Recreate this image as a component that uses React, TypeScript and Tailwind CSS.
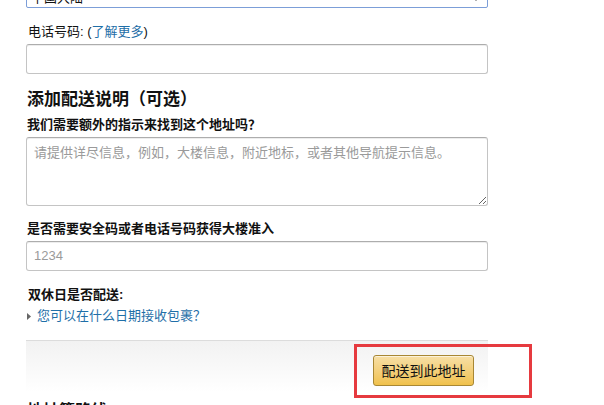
import React from "react";

const font = "font-['Liberation_Sans','Noto_Sans_CJK_SC',sans-serif]";

export default function App() {
  return (
    <div className={`relative w-[604px] h-[405px] overflow-hidden bg-white text-[#111] ${font}`}>
      <div className="flex flex-col ml-[26px] w-[462px]">
        {/* select (cut at top) */}
        <div className="relative mt-[-15px] h-[23px] border border-[#7c9ed8] rounded-[2px] bg-white flex items-end pl-[4px] text-[13px] leading-[18px]">
          中国大陆
          <svg className="absolute right-[8px] top-[11px]" width="6" height="4" viewBox="0 0 6 4">
            <path d="M0 0 L6 0 L3 4 Z" fill="#333" />
          </svg>
        </div>

        <div className="mt-[15px] ml-[2px] text-[13px] leading-[18px]">
          电话号码: (<span className="text-[#1f6fa8]">了解更多</span>)
        </div>
        <div className="mt-[3px] h-[30px] border border-[#c4c4c4] border-t-[#adadad] rounded-[3px] shadow-[inset_0_1px_0_rgba(0,0,0,0.07)]" />

        <div className="mt-[14px] ml-[1px] text-[17px] leading-[24px] font-bold">添加配送说明（可选）</div>
        <div className="mt-[4px] ml-[1px] text-[13px] leading-[18px] font-bold">我们需要额外的指示来找到这个地址吗？</div>
        <textarea
          className="mt-[3px] h-[69px] w-full border border-[#c4c4c4] border-t-[#adadad] rounded-[3px] shadow-[inset_0_1px_0_rgba(0,0,0,0.07)] px-[7px] py-[6px] text-[13px] leading-[18px] placeholder:text-[#9a9a9a] outline-none"
          placeholder="请提供详尽信息，例如，大楼信息，附近地标，或者其他导航提示信息。"
        />

        <div className="mt-[14px] ml-[1px] text-[13px] leading-[18px] font-bold">是否需要安全码或者电话号码获得大楼准入</div>
        <div className="mt-[3px] h-[30px] border border-[#c4c4c4] border-t-[#adadad] rounded-[3px] shadow-[inset_0_1px_0_rgba(0,0,0,0.07)] flex items-center px-[7px] text-[13px] text-[#9a9a9a]">
          1234
        </div>

        <div className="mt-[15px] ml-[2px] text-[13px] leading-[18px] font-bold">双休日是否配送:</div>
        <div className="mt-[3px] ml-[1px] flex items-center gap-[6px] text-[13px] leading-[18px]">
          <svg width="4" height="7" viewBox="0 0 4 7">
            <path d="M0 0 L4 3.5 L0 7 Z" fill="#666" />
          </svg>
          <span className="text-[#1f6fa8]">您可以在什么日期接收包裹？</span>
        </div>

        <div className="mt-[15px] h-[52px] border-t border-[#dcdcdc] bg-gradient-to-b from-[#f2f2f2] to-white flex justify-end items-start pt-[14px] pr-[14px]">
          <button className="h-[31px] w-[101px] rounded-[3px] border border-[#a88734] bg-gradient-to-b from-[#f7dfa5] to-[#f0c14b] text-[14px] leading-[18px] text-[#111] shadow-[inset_0_1px_0_rgba(255,255,255,0.6)]">
            配送到此地址
          </button>
        </div>

        <div className="mt-[9px] ml-[1px] text-[16px] leading-[20px] font-bold">地址簿路线</div>
      </div>

      <div className="absolute left-[354px] top-[344px] w-[178px] h-[54px] border-[3px] border-[#e63a3f]" />
    </div>
  );
}
